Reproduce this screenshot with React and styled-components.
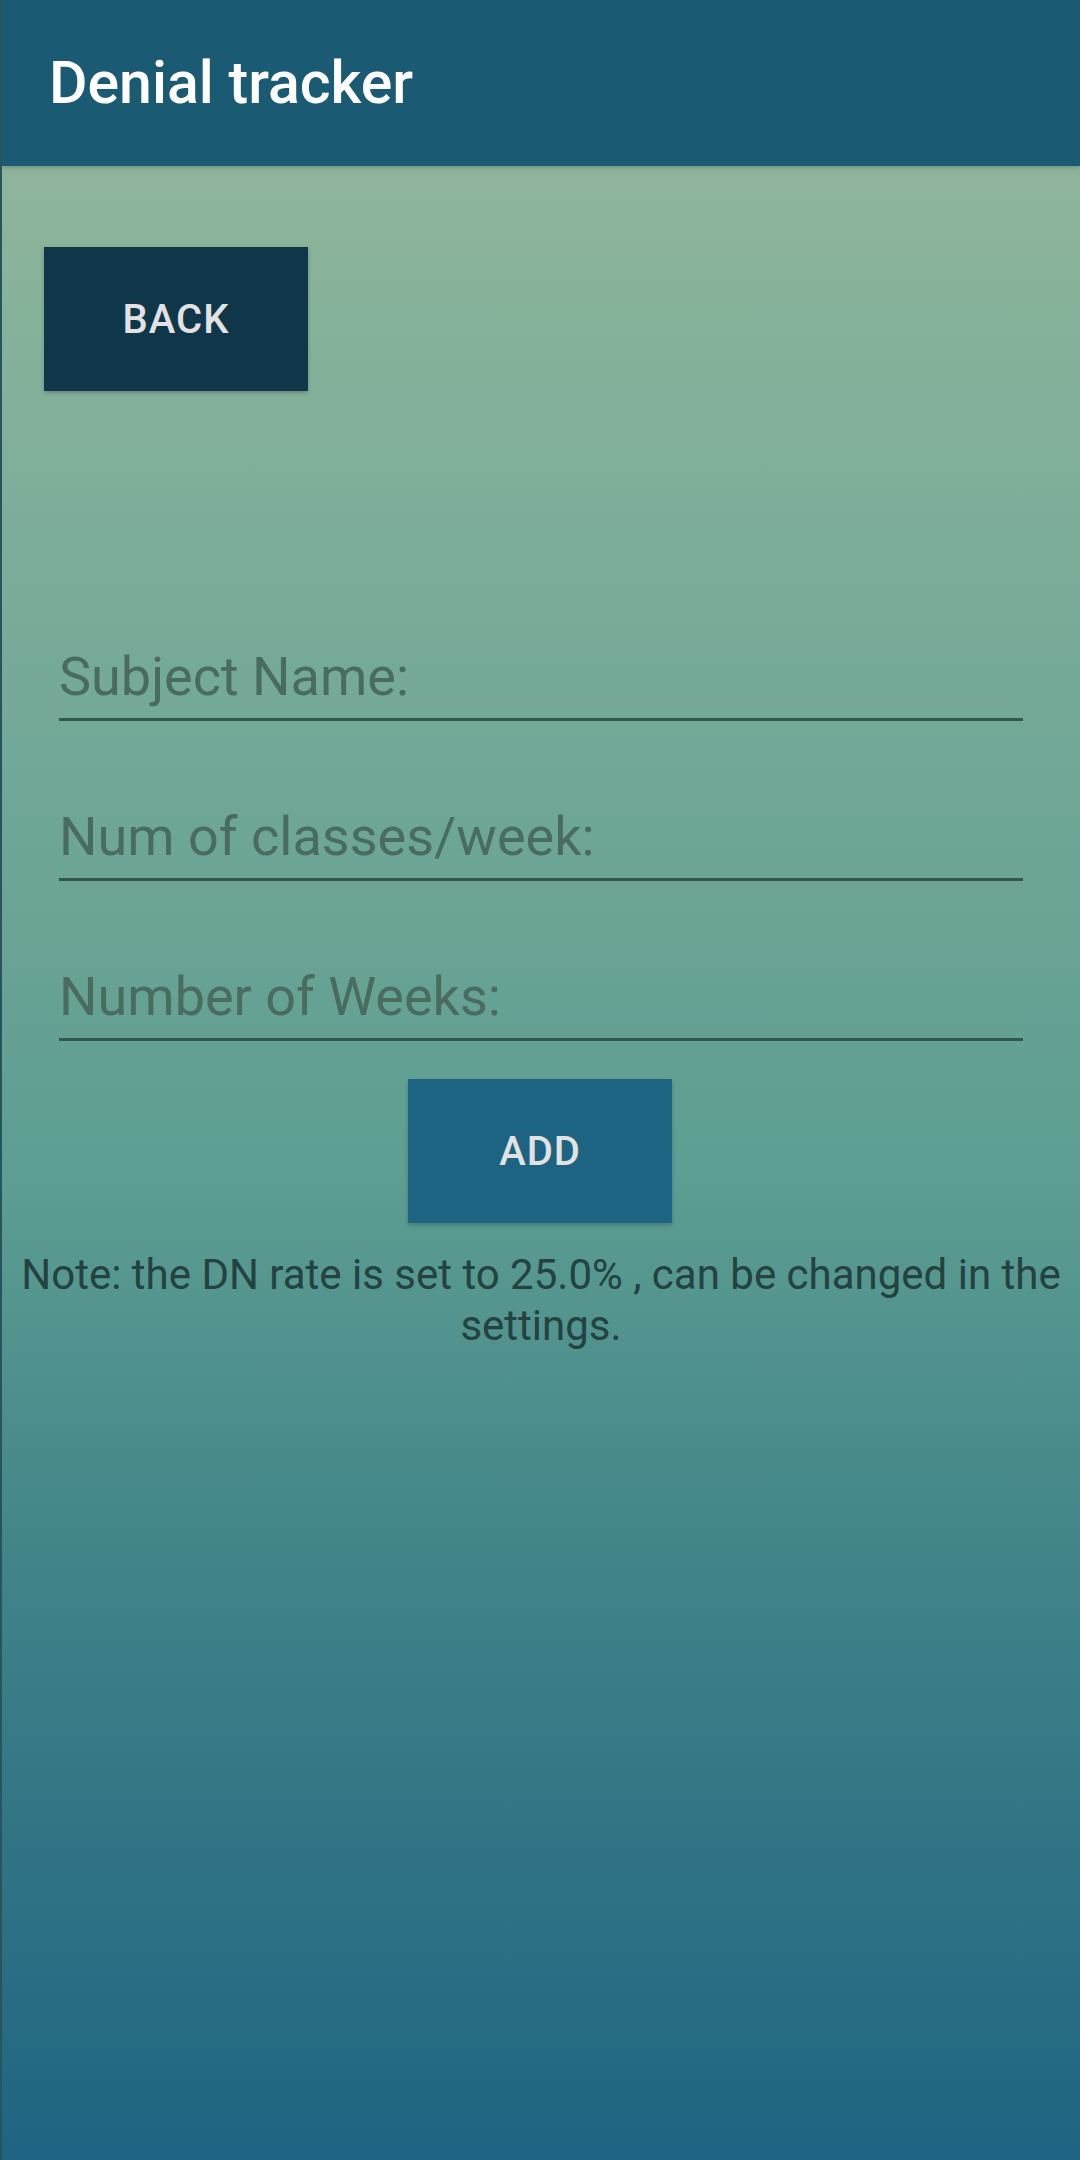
import React from "react";
import styled, { createGlobalStyle } from "styled-components";

const GlobalStyle = createGlobalStyle`
  html, body {
    margin: 0;
    padding: 0;
  }
  body {
    font-family: Roboto, "Noto Sans", Arial, sans-serif;
  }
  * {
    box-sizing: border-box;
  }
`;

const Screen = styled.div`
  width: 1080px;
  height: 2160px;
  display: flex;
  flex-direction: column;
  border-left: 2px solid #27545d;
  overflow: hidden;
`;

const AppBar = styled.header`
  height: 166px;
  flex-shrink: 0;
  display: flex;
  align-items: center;
  padding-left: 47px;
  background: #1b5a73;
  box-shadow: 0 2px 4px rgba(0, 0, 0, 0.18);
  position: relative;
  z-index: 1;
`;

const Title = styled.h1`
  margin: 0;
  color: #ffffff;
  font-size: 59px;
  font-weight: 500;
  line-height: 1;
  padding-bottom: 2px;
`;

const Body = styled.main`
  flex: 1;
  display: flex;
  flex-direction: column;
  background: linear-gradient(
    to bottom,
    #8eb59b 0%,
    #76aa98 25%,
    #5e9e92 50%,
    #3a7e87 75%,
    #1f6482 100%
  );
`;

const Button = styled.button`
  width: 264px;
  height: 144px;
  border: none;
  border-radius: 0;
  background: ${(p) => (p.$variant === "dark" ? "#10364a" : "#1d6382")};
  color: #e2e2e2;
  font-family: Roboto, Arial, sans-serif;
  font-size: 40px;
  font-weight: 500;
  letter-spacing: 1px;
  text-transform: uppercase;
  box-shadow: 0 2px 4px rgba(0, 0, 0, 0.22);
  cursor: pointer;
`;

const BackRow = styled.div`
  padding: 81px 0 0 42px;
`;

const Form = styled.form`
  display: flex;
  flex-direction: column;
  gap: 84px;
  padding: 254px 57px 0 57px;
`;

const Field = styled.input`
  display: block;
  width: 100%;
  height: 76px;
  margin: 0;
  padding: 0 0 11px 0;
  border: none;
  border-bottom: 3px solid #33574c;
  background: transparent;
  font-family: Roboto, Arial, sans-serif;
  font-size: 54px;
  line-height: 62px;
  color: #23403a;
  outline: none;

  &::placeholder {
    color: #4a6c60;
    opacity: 1;
  }
`;

const AddRow = styled.div`
  display: flex;
  justify-content: center;
  padding-top: 38px;
  padding-right: 2px;
`;

const Note = styled.p`
  margin: 26px 0 0 0;
  padding: 0 10px;
  text-align: center;
  font-size: 42px;
  line-height: 51px;
  color: #24423f;
`;

export default function App() {
  return (
    <>
      <GlobalStyle />
      <Screen>
        <AppBar>
          <Title>Denial tracker</Title>
        </AppBar>
        <Body>
          <BackRow>
            <Button $variant="dark" type="button">
              Back
            </Button>
          </BackRow>
          <Form onSubmit={(e) => e.preventDefault()}>
            <Field placeholder="Subject Name:" />
            <Field placeholder="Num of classes/week:" />
            <Field placeholder="Number of Weeks:" />
          </Form>
          <AddRow>
            <Button type="button">Add</Button>
          </AddRow>
          <Note>
            Note: the DN rate is set to 25.0% , can be changed in the settings.
          </Note>
        </Body>
      </Screen>
    </>
  );
}
